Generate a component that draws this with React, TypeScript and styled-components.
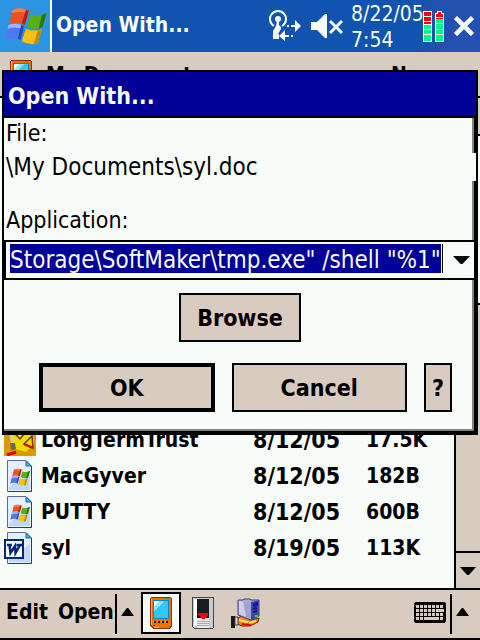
import React from "react";
import styled, { createGlobalStyle } from "styled-components";

const paper = "#f8fcf8";
const sand = "#d8ccc0";
const navy = "#000098";
const ink = "#000000";

const GlobalStyle = createGlobalStyle`
  * { box-sizing: border-box; }
  body {
    margin: 0;
    background: ${paper};
    color: ${ink};
    font-family: "DejaVu Sans Condensed", "Noto Sans", sans-serif;
  }
  button, input { font: inherit; color: inherit; }
  button { padding: 0; border: 0; border-radius: 0; background: none; cursor: pointer; }
  svg { display: block; flex: none; }
`;

const Screen = styled.div`
  position: relative;
  display: flex;
  flex-direction: column;
  min-height: 100vh;
  overflow: hidden;
`;

const TopBar = styled.header`
  display: flex;
  height: 52px;
  background: linear-gradient(to right, #1054b0 0, #1054b0 86%, #2450b0 92%, #2450b0 100%);
  color: ${paper};
`;

const StartButton = styled.button`
  display: flex;
  width: 52px;
  padding-left: 4px;
  align-items: center;
  border-right: 2px solid ${paper};
  background: #2c94e0;
`;

const AppTitle = styled.h1`
  flex: 1;
  margin: 0;
  padding-left: 4px;
  font-size: 21px;
  font-weight: 700;
  line-height: 51px;
  white-space: nowrap;
`;

const Tray = styled.div`
  display: flex;
  align-items: center;
`;

const TrayButton = styled.button<{ $gap: number }>`
  display: flex;
  margin-right: ${(p) => p.$gap}px;
`;

const Clock = styled.time`
  width: 72px;
  padding-top: 2px;
  font-size: 21px;
  line-height: 26px;
  white-space: nowrap;
`;

const ListHeader = styled.div`
  display: grid;
  grid-template-columns: 46px 1fr 89px;
  height: 46px;
  border-bottom: 2px solid ${ink};
  background: ${sand};
  font-size: 21px;
  font-weight: 700;
  line-height: 46px;
  white-space: nowrap;

  svg { margin: 8px 0 0 10px; }
`;

const Browser = styled.main`
  display: flex;
  flex: 1;
`;

const FileList = styled.div`
  display: flex;
  flex: 1;
  flex-direction: column;
  justify-content: flex-end;
  padding-bottom: 22px;
`;

const FileTable = styled.table`
  width: 100%;
  border-collapse: collapse;
  table-layout: fixed;
  font-weight: 700;
  font-size: 23px;
  line-height: 36px;
  white-space: nowrap;

  tr { height: 36px; }
  td { padding: 0; height: 36px; }
`;

const IconCell = styled.td`
  width: 41px;

  svg { margin-left: 4px; }
`;

const NameCell = styled.td`
  font-size: 21px;
`;

const DateCell = styled.td`
  width: 113px;
`;

const SizeCell = styled.td`
  width: 88px;
  font-size: 21px;
`;

const ScrollBar = styled.div`
  display: flex;
  flex-direction: column;
  width: 26px;
  border-left: 2px solid ${ink};
  background: ${sand};
`;

const ScrollArrow = styled.button<{ $end?: boolean }>`
  display: flex;
  height: ${(p) => (p.$end ? 37 : 36)}px;
  align-items: center;
  justify-content: center;
  border-top: ${(p) => (p.$end ? `2px solid ${ink}` : "0")};
`;

const ScrollThumb = styled.div`
  height: 171px;
  border: solid ${ink};
  border-width: 2px 0;
  background: ${paper};
`;

const ScrollTrack = styled.div`
  flex: 1;
`;

const BottomBar = styled.footer`
  display: flex;
  height: 52px;
  padding: 2px 11px 4px 6px;
  border: solid ${ink};
  border-width: 2px 0;
  background: ${sand};
`;

const MenuButton = styled.button`
  height: 40px;
  margin-right: 10px;
  font-size: 21px;
  font-weight: 700;
`;

const MenuGroup = styled.div`
  display: flex;
  width: 109px;
  white-space: nowrap;
`;

const Divider = styled.span`
  width: 2px;
  height: 40px;
  margin: 2px 4px 0 0;
  background: ${ink};
`;

const PopupButton = styled.button`
  display: flex;
  height: 40px;
  align-items: center;
`;

const ToolButton = styled.button<{ $active?: boolean }>`
  display: flex;
  width: 40px;
  height: 42px;
  margin-right: 2px;
  align-items: center;
  justify-content: center;
  border: 2px solid ${(p) => (p.$active ? ink : "transparent")};
  background: ${(p) => (p.$active ? paper : "transparent")};
`;

const ToolGroup = styled.div`
  display: flex;
  flex: 1;
  padding-left: 7px;
`;

const KeyboardButton = styled.button`
  display: flex;
  height: 40px;
  margin-right: 4px;
  align-items: center;
`;

const Dialog = styled.section`
  position: absolute;
  top: 70px;
  left: 2px;
  right: 2px;
  border: 2px solid ${ink};
  background: ${paper};
`;

const DialogTitle = styled.h2`
  margin: 0;
  height: 46px;
  padding-left: 4px;
  border-bottom: 2px solid ${ink};
  background: ${navy};
  color: ${paper};
  font-size: 23px;
  font-weight: 700;
  line-height: 48px;
`;

const DialogBody = styled.form`
  padding: 0 2px 21px 0;
  box-shadow: inset -2px -2px 0 ${ink}, inset -4px -4px 0 #848284;
`;

const Caption = styled.label`
  display: block;
  padding-left: 2px;
  font-size: 23px;
  line-height: 30px;
`;

const FilePath = styled.output`
  display: block;
  margin: 5px -2px 24px 0;
  padding-left: 2px;
  background: ${paper};
  font-size: 24px;
  line-height: 28px;
`;

const Combo = styled.div`
  display: flex;
  height: 40px;
  margin-top: 5px;
  padding: 2px 0 3px 4px;
  border: solid ${ink};
  border-width: 2px 0 2px 2px;
  background: ${paper};
`;

const ComboInput = styled.input`
  flex: 1;
  min-width: 0;
  height: 29px;
  padding: 2px 0 0;
  border: 0;
  outline: 0;
  background: ${navy};
  color: ${paper};
  font-size: 24px;
  line-height: 27px;
`;

const Caret = styled.span`
  width: 2px;
  height: 29px;
  border-right: 1px solid ${ink};
`;

const ComboButton = styled.button`
  display: flex;
  width: 31px;
  padding-left: 10px;
  align-items: center;
`;

const BrowseRow = styled.div`
  display: flex;
  justify-content: center;
  margin: 13px 0 21px 2px;
`;

const ActionRow = styled.div`
  display: grid;
  grid-template-columns: 1fr 1fr 28px;
  gap: 17px;
  padding: 0 22px 0 35px;
`;

const Action = styled.button<{ $default?: boolean }>`
  height: 49px;
  border: ${(p) => (p.$default ? 4 : 2)}px solid ${ink};
  background: ${sand};
  font-size: 23px;
  font-weight: 700;
`;

const BrowseAction = styled(Action)`
  width: 122px;
`;

const FlagShape = () => (
  <>
    <path d="M36 28Q58 16 85 30L73 72Q52 62 26 70Z" fill="#f0501c" />
    <path d="M36 28Q58 16 85 30L82 40Q58 28 33 38Z" fill="#f88050" />
    <path d="M85 30L73 72L64 68L76 27Z" fill="#b02008" />
    <path d="M90 40Q112 50 138 38L126 80Q104 90 79 78Z" fill="#58b018" />
    <path d="M138 38L126 80L114 84L124 43Z" fill="#287800" />
    <path d="M24 73Q48 64 71 76L60 118Q38 108 12 119Z" fill="#5078f0" />
    <path d="M24 73Q48 64 71 76L68 86Q46 76 21 85Z" fill="#a0b8ff" />
    <path d="M71 76L60 118L52 114L62 72Z" fill="#2848c0" />
    <path d="M76 84Q100 94 124 86L112 128Q90 136 64 122Z" fill="#f8c010" />
    <path d="M124 86L112 128L100 131L111 90Z" fill="#c08800" />
  </>
);

const WindowsFlag = () => (
  <svg width="43" height="38" viewBox="11 19 128 114"><FlagShape /></svg>
);

const Sheet = () => (
  <>
    <path d="M3.5.5H22L27.5 6V31.5H3.5Z" fill="#e4f0ff" stroke="#606890" />
    <path d="M5 30V27L26 12V30Z" fill="#c0d8fc" />
    <path d="M4 31.5H27.5V6" fill="none" stroke="#303878" />
    <path d="M22 1V6H27Z" fill="#38b8f8" stroke="#2068b0" />
  </>
);

const SystemFileIcon = () => (
  <svg width="32" height="32" viewBox="0 0 32 32">
    <Sheet />
    <svg x="6" y="8" width="20" height="18" viewBox="11 19 128 114"><FlagShape /></svg>
  </svg>
);

const WordFileIcon = () => (
  <svg width="32" height="32" viewBox="0 0 32 32">
    <Sheet />
    <rect x="1" y="8" width="18" height="18" fill={paper} stroke="#002878" strokeWidth="2" />
    <path d="M3 13H8M12.500 13H18M5.500 13L6.500 21L11 14L11.500 21L16 13" fill="none" stroke="#002878" strokeWidth="2.500" />
  </svg>
);

const SketchFileIcon = () => (
  <svg width="32" height="32" viewBox="0 0 32 32">
    <rect width="32" height="32" fill="#d89c00" />
    <path d="M4 4H28L30 20L22 28L8 24Z" fill="#e8e000" />
    <path d="M11 10L16 15L20 10M20 20L28 12L29 24Z" fill="none" stroke="#803000" strokeWidth="1.500" />
    <path d="M20 20L29 24" stroke="#d80000" strokeWidth="2" />
    <path d="M5 6L9 20" stroke="#d0d0b0" strokeWidth="2" />
    <path d="M6 19L11 19L12 25L7 26Z" fill="#706848" />
    <path d="M3 31L12 28" stroke="#e00000" strokeWidth="3" />
  </svg>
);

const HandheldIcon = () => (
  <svg width="22" height="32" viewBox="0 0 22 32" shapeRendering="crispEdges">
    <path d="M1 0H21V1H22V29L19 32H3L0 29V1H1Z" fill="#903000" />
    <path d="M1 1H21V28L18 31H4L1 28Z" fill="#f07008" />
    <path d="M1 1H2V28L4 30H9V31H4L1 28Z" fill="#f8b040" />
    <rect x="15" y="1" width="4" height="1" fill="#50a000" />
    <rect x="3" y="3" width="16" height="19" fill="#0088c8" />
    <rect x="4" y="4" width="14" height="17" fill="#30c8f8" />
    <path d="M4 4H14L4 15Z" fill="#90e4fc" />
    <path d="M4 4H9L4 9Z" fill="#e8fcfc" />
    <path d="M4 24H6V26H4ZM8 24H10V26H8ZM12 24H14V26H12ZM16 24H18V26H16Z" fill="#101010" />
    <path d="M3 24H4V25H3ZM7 24H8V25H7ZM11 24H12V25H11ZM15 24H16V25H15Z" fill="#fff" />
    <rect x="3" y="28" width="2" height="1" fill="#301000" />
  </svg>
);

const CardIcon = () => (
  <svg width="22" height="32" viewBox="0 0 22 32" shapeRendering="crispEdges">
    <path d="M0 0H22V30L20 32H2L0 30Z" fill="#404848" />
    <path d="M1 1H21V30L20 31H2L1 30Z" fill="#c8cccc" />
    <path d="M2 2H5V29H2Z" fill="#fff" />
    <path d="M5 2H17V21H5Z" fill="#181c1c" />
    <path d="M5 21H17V31H5Z" fill="#e8ecec" />
    <path d="M5 24H17V25H5ZM5 26H17V27H5ZM5 28H17V29H5Z" fill="#a8acac" />
    <path d="M6 16H16V18L12 22H10L6 18Z" fill="#f80000" />
  </svg>
);

const NetworkIcon = () => (
  <svg width="29" height="30" viewBox="0 0 29 30">
    <path d="M6 21L10 18L20 22L28 20L27 24L19 28H11L6 26Z" fill="#f08020" stroke="#901000" />
    <path d="M8 22L16 24L13 26M18 25L25 23" fill="none" stroke="#f8e060" strokeWidth="2" />
    <path d="M11 26L20 27" stroke="#d01800" strokeWidth="2" />
    <path d="M7 2H12L13 1H19L20 2H28V18L20 22L7 17Z" fill="#a8acd8" stroke="#404088" />
    <path d="M8 3L18 4V20L8 16Z" fill="#d0d0e8" />
    <path d="M12 3L20 4V21L15 19Z" fill="#a0a4d0" />
    <path d="M20 4L28 2V18L20 22Z" fill="#4048a8" />
    <path d="M22 5L27 4V8L22 9Z" fill="#1010c0" />
    <path d="M22 11L26 10M22 14L26 13" stroke="#181878" strokeWidth="2" />
    <rect x="24" y="17" width="3" height="2" fill="#30d830" />
    <path d="M0 18H4V30H0Z" fill="#181818" />
    <path d="M4 19H7V27H4Z" fill="#d8d8d8" stroke="#484848" />
  </svg>
);

const KeyboardIcon = () => (
  <svg width="32" height="21" viewBox="0 0 32 21" shapeRendering="crispEdges">
    <path d="M1 0H31V1H32V20H31V21H1V20H0V1H1Z" fill={ink} />
    <path
      d="M2 4.500H30M2 8.500H30M2 12.500H30M2 16.500H30"
      fill="none"
      stroke={sand}
      strokeWidth="3"
      strokeDasharray="3 1"
    />
    <path d="M24 7H30V10H24ZM10 15H22V18H10Z" fill={sand} />
  </svg>
);

const SignalIcon = () => (
  <svg width="32" height="32" viewBox="0 0 32 32" fill="none" stroke={paper}>
    <path d="M5 16A8 8 0 1 1 13 16" strokeWidth="2" />
    <circle cx="9" cy="9" r="3" fill={paper} stroke="none" />
    <path d="M8 10H10V15L12 17V19L9 24H10V29H4V21L7 16Z" fill={paper} stroke="none" />
    <path d="M18 15H20V17H18ZM22 15H26V10L32 16L26 22V17H22ZM24 25H22V27H24ZM20 25H16V20L10 26L16 31V27H20Z" fill={paper} stroke="none" />
  </svg>
);

const MuteIcon = () => (
  <svg width="32" height="24" viewBox="0 0 32 24">
    <path d="M0 8H6L14 0H16V24H14L6 16H0Z" fill={paper} />
    <path d="M19 7L31 19M31 7L19 19" stroke={paper} strokeWidth="3" />
  </svg>
);

const BatteryIcon = () => (
  <svg width="21" height="31" viewBox="0 0 21 31" shapeRendering="crispEdges">
    <path d="M0 0H9V31H0ZM14 0H19V2H21V31H12V2H14Z" fill={paper} />
    <path d="M1 1H8V5H1ZM1 6H8V10H1ZM1 11H8V13H1ZM15 1H18V3H20V6H13V3H15ZM13 7H20V8H13Z" fill="#f80000" />
    <path d="M1 14H8V18H1ZM1 19H8V23H1ZM1 24H8V30H1ZM13 8H20V12H13ZM13 13H20V18H13ZM13 19H20V23H13ZM13 24H20V30H13Z" fill="#00f880" />
  </svg>
);

const CloseIcon = () => (
  <svg width="20" height="20" viewBox="0 0 20 20">
    <path d="M1.500 1.500L18.500 18.500M18.500 1.500L1.500 18.500" stroke={paper} strokeWidth="4.500" />
  </svg>
);

const Triangle = ({ width, up }: { width: number; up?: boolean }) => (
  <svg width={width} height="8" viewBox="0 0 18 8" preserveAspectRatio="none">
    <path d={up ? "M0 8L8 0H10L18 8Z" : "M0 0H18L10 8H8Z"} fill={ink} />
  </svg>
);

const files = [
  { name: "LongTermTrust", date: "8/12/05", size: "17.5K", Icon: SketchFileIcon },
  { name: "MacGyver", date: "8/12/05", size: "182B", Icon: SystemFileIcon },
  { name: "PUTTY", date: "8/12/05", size: "600B", Icon: SystemFileIcon },
  { name: "syl", date: "8/19/05", size: "113K", Icon: WordFileIcon },
];

export default function App() {
  return (
    <Screen>
      <GlobalStyle />
      <TopBar>
        <StartButton aria-label="Start"><WindowsFlag /></StartButton>
        <AppTitle>Open With...</AppTitle>
        <Tray>
          <TrayButton $gap={10} aria-label="Connectivity"><SignalIcon /></TrayButton>
          <TrayButton $gap={8} aria-label="Volume"><MuteIcon /></TrayButton>
          <Clock>8/22/05<br />7:54</Clock>
          <TrayButton $gap={10} aria-label="Battery"><BatteryIcon /></TrayButton>
          <TrayButton $gap={6} aria-label="Close"><CloseIcon /></TrayButton>
        </Tray>
      </TopBar>

      <ListHeader>
        <HandheldIcon />
        <span>My Documents</span>
        <span>Name</span>
      </ListHeader>

      <Browser>
        <FileList>
          <FileTable>
            <tbody>
              {files.map(({ name, date, size, Icon }) => (
                <tr key={name}>
                  <IconCell><Icon /></IconCell>
                  <NameCell>{name}</NameCell>
                  <DateCell>{date}</DateCell>
                  <SizeCell>{size}</SizeCell>
                </tr>
              ))}
            </tbody>
          </FileTable>
        </FileList>
        <ScrollBar>
          <ScrollArrow aria-label="Scroll up"><Triangle width={16} up /></ScrollArrow>
          <ScrollThumb />
          <ScrollTrack />
          <ScrollArrow $end aria-label="Scroll down"><Triangle width={16} /></ScrollArrow>
        </ScrollBar>
      </Browser>

      <BottomBar>
        <MenuGroup>
          <MenuButton>Edit</MenuButton>
          <MenuButton>Open</MenuButton>
        </MenuGroup>
        <Divider />
        <PopupButton aria-label="More commands"><Triangle width={13} up /></PopupButton>
        <ToolGroup>
          <ToolButton $active aria-label="Device"><HandheldIcon /></ToolButton>
          <ToolButton aria-label="Storage card"><CardIcon /></ToolButton>
          <ToolButton aria-label="Network"><NetworkIcon /></ToolButton>
        </ToolGroup>
        <KeyboardButton aria-label="Keyboard"><KeyboardIcon /></KeyboardButton>
        <Divider />
        <PopupButton aria-label="Input methods"><Triangle width={13} up /></PopupButton>
      </BottomBar>

      <Dialog role="dialog" aria-labelledby="dialog-title">
        <DialogTitle id="dialog-title">Open With...</DialogTitle>
        <DialogBody onSubmit={(e) => e.preventDefault()}>
          <Caption htmlFor="file">File:</Caption>
          <FilePath id="file">\My Documents\syl.doc</FilePath>
          <Caption htmlFor="application">Application:</Caption>
          <Combo>
            <ComboInput id="application" defaultValue={'Storage\\SoftMaker\\tmp.exe" /shell "%1"'} />
            <Caret />
            <ComboButton type="button" aria-label="Show applications"><Triangle width={17} /></ComboButton>
          </Combo>
          <BrowseRow>
            <BrowseAction type="button">Browse</BrowseAction>
          </BrowseRow>
          <ActionRow>
            <Action type="submit" $default>OK</Action>
            <Action type="button">Cancel</Action>
            <Action type="button">?</Action>
          </ActionRow>
        </DialogBody>
      </Dialog>
    </Screen>
  );
}
